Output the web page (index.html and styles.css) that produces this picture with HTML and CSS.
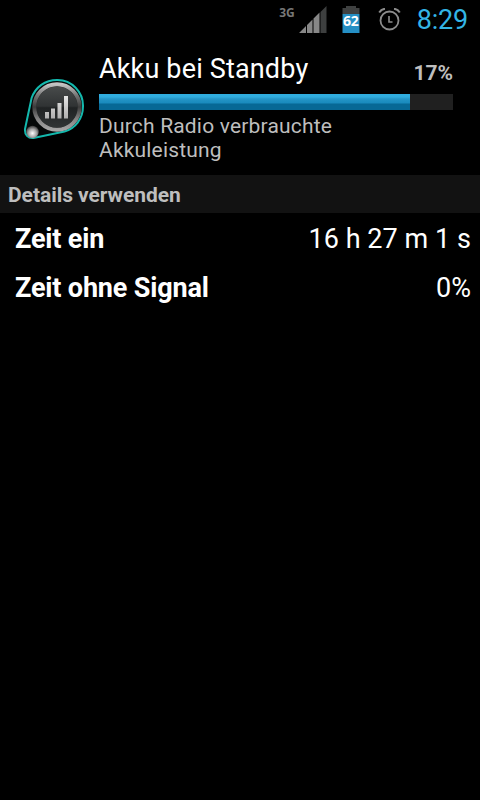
FILE: index.html
```html
<!DOCTYPE html>
<html lang="de">
<head>
    <meta charset="UTF-8" />
    <meta name="viewport" content="width=device-width, initial-scale=1" />
    <title>Akku bei Standby</title>
    <link rel="stylesheet" href="styles.css">
</head>
<body>
    <header class="status-bar">
        <span class="network">3G</span>
        <svg class="signal" width="28" height="28" viewBox="0 0 28 28">
            <path d="M0 27L7 20V27ZM8 19L13.500 13.500V27H8ZM14.500 12.500L20.500 6.500V27H14.500Z" fill="#878787" />
            <path d="M21.500 6L27.500 0V27H21.500Z" fill="#3d3f3f" />
        </svg>
        <div class="battery">
            <svg width="18" height="28" viewBox="0 0 18 28">
                <path d="M4 0H14V2H17.500V8H0.500V2H4Z" fill="#3f4141" />
                <path d="M0.500 8H17.500V27H0.500Z" fill="#258fc4" />
            </svg>
            <span class="battery-level">62</span>
        </div>
        <svg class="alarm" width="24" height="24" viewBox="0 0 24 24" fill="none" stroke="#8c8c8c">
            <circle cx="11.500" cy="12.500" r="9" stroke-width="1.800" />
            <path d="M11 8V14H14.500" stroke-width="1.600" />
            <path d="M1.200 4.500C2.500 2.500 4.500 1 7 0.800M16 0.800C18.500 1 20.500 2.500 21.800 4.500" stroke-width="2" />
        </svg>
        <span class="clock">8:29</span>
    </header>

    <section class="summary">
        <svg class="app-icon" width="62" height="62" viewBox="0 0 62 62">
            <defs>
                <linearGradient id="rim" x1="0" y1="0" x2="0" y2="1">
                    <stop offset="0" stop-color="#c4c4c4" />
                    <stop offset="0.250" stop-color="#757575" />
                    <stop offset="0.500" stop-color="#3c3c3c" />
                    <stop offset="0.750" stop-color="#808080" />
                    <stop offset="1" stop-color="#a5a5a5" />
                </linearGradient>
                <linearGradient id="face" x1="0" y1="0" x2="0" y2="1">
                    <stop offset="0" stop-color="#484b4b" />
                    <stop offset="0.480" stop-color="#303334" />
                    <stop offset="0.520" stop-color="#202324" />
                    <stop offset="1" stop-color="#303435" />
                </linearGradient>
                <linearGradient id="bars" x1="0" y1="0" x2="0" y2="1">
                    <stop offset="0" stop-color="#e6e6e6" />
                    <stop offset="1" stop-color="#b0b0b0" />
                </linearGradient>
                <radialGradient id="knob" cx="0.500" cy="0.600" r="0.600">
                    <stop offset="0" stop-color="#fff" />
                    <stop offset="0.550" stop-color="#a5a5a5" />
                    <stop offset="1" stop-color="#383838" />
                </radialGradient>
            </defs>
            <path d="M8.600 19C12.500 8 22 1 34 1A25.700 25.700 0 0 1 60 27.500C60 40 52 49.500 41.500 52.500L10.500 59C5 59.500 1.500 55.500 2 50Z" fill="#050808" stroke="#13b8ad" stroke-width="2" />
            <circle cx="34" cy="28" r="22.700" fill="#292b2b" stroke="url(#rim)" stroke-width="4" />
            <circle cx="34" cy="28" r="20.500" fill="url(#face)" />
            <path d="M22 33H26V39.500H22ZM28 29.500H32V39.500H28ZM34.500 24H38.500V39.500H34.500ZM41 17H45V39.500H41Z" fill="url(#bars)" />
            <circle cx="9.500" cy="53" r="6.200" fill="url(#knob)" />
        </svg>
        <div class="summary-text">
            <div class="title-row">
                <h1>Akku bei Standby</h1>
                <span class="percent">17%</span>
            </div>
            <div class="progress"><div class="progress-fill"></div></div>
            <p>Durch Radio verbrauchte Akkuleistung</p>
        </div>
    </section>

    <h2>Details verwenden</h2>
    <dl class="details">
        <div class="row">
            <dt>Zeit ein</dt>
            <dd>16 h 27 m 1 s</dd>
        </div>
        <div class="row">
            <dt>Zeit ohne Signal</dt>
            <dd>0%</dd>
        </div>
    </dl>
</body>
</html>
```
FILE: styles.css
```css
html, body {
    height: 100%;
    margin: 0;
    padding: 0;
    background: #000;
    font-family: Roboto, sans-serif;
    color: #fff;
}

h1, h2, p, dl, dt, dd {
    margin: 0;
}

svg {
    display: block;
}

.status-bar {
    display: flex;
    align-items: flex-start;
    height: 38px;
    padding-right: 12px;
    justify-content: flex-end;
    box-sizing: border-box;
}

.network {
    margin: 5px 4px 0 0;
    font-family: "Open Sans", sans-serif;
    font-size: 12px;
    line-height: 16px;
    font-weight: 700;
    color: #777;
}

.signal {
    margin: 6px 15px 0 0;
}

.battery {
    position: relative;
    margin: 6px 18px 0 0;
}

.battery-level {
    position: absolute;
    left: 0;
    top: 7px;
    width: 18px;
    text-align: center;
    font-family: "Open Sans", sans-serif;
    font-size: 14px;
    line-height: 16px;
    font-weight: 700;
    letter-spacing: -0.3px;
}

.alarm {
    margin: 8px 15px 0 0;
}

.clock {
    font-size: 27px;
    line-height: 40px;
    letter-spacing: -0.2px;
    color: #33b5e5;
}

.summary {
    display: flex;
    height: 137px;
    padding: 0 27px 0 23px;
    box-sizing: border-box;
}

.app-icon {
    flex: none;
    margin: 41px 14px 0 0;
}

.summary-text {
    flex: 1;
    padding-top: 14px;
}

.title-row {
    display: flex;
    justify-content: space-between;
    align-items: flex-start;
    height: 42px;
}

h1 {
    font-size: 27px;
    line-height: 34px;
    font-weight: 400;
    letter-spacing: 0.16px;
}

.percent {
    padding-top: 9px;
    font-size: 21px;
    line-height: 24px;
    font-weight: 700;
    color: #bebebe;
}

.progress {
    height: 16px;
    background: #202020;
}

.progress-fill {
    width: 311px;
    height: 16px;
    background: linear-gradient(#30addf 0, #2fabdc 3px, #2494c6 5px, #198abd 9px, #076895 10px, #076895 16px);
}

p {
    width: 260px;
    padding-top: 4px;
    font-size: 21px;
    line-height: 24px;
    letter-spacing: 0.18px;
    color: #bebebe;
}

h2 {
    height: 38px;
    padding-left: 8px;
    background: #121212;
    font-size: 21px;
    line-height: 40px;
    font-weight: 700;
    letter-spacing: -0.05px;
    color: #bebebe;
}

.details {
    padding: 0 9px 0 15px;
}

.row {
    display: flex;
    justify-content: space-between;
    height: 49px;
    font-size: 27px;
    line-height: 53px;
}

dt {
    font-weight: 700;
    letter-spacing: -0.17px;
}

dd {
    letter-spacing: 0.05px;
}
```
